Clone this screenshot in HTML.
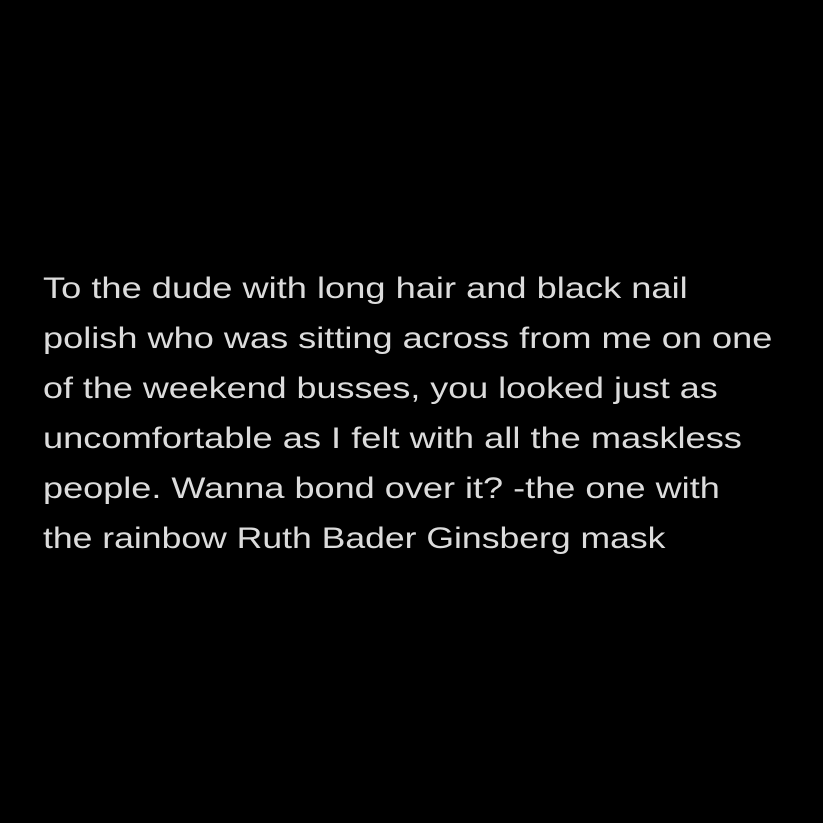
<!DOCTYPE html>
<html>
<head>
<meta charset="utf-8">
<style>
  html, body { margin: 0; padding: 0; background: #000; }
  body { width: 823px; height: 823px; position: relative; overflow: hidden; }
  .t {
    position: absolute; left: 43px; top: 264px;
    font-family: "Liberation Sans", sans-serif;
    font-size: 30px; line-height: 50px; color: #dcdcdc;
    white-space: nowrap;
  }
  .t div { transform-origin: 0 0; height: 50px; }
</style>
</head>
<body>
<div class="t">
<div style="transform:scaleX(1.208)">To the dude with long hair and black nail</div>
<div style="transform:scaleX(1.205)">polish who was sitting across from me on one</div>
<div style="transform:scaleX(1.197)">of the weekend busses, you looked just as</div>
<div style="transform:scaleX(1.208)">uncomfortable as I felt with all the maskless</div>
<div style="transform:scaleX(1.203)">people. Wanna bond over it? -the one with</div>
<div style="transform:scaleX(1.185)">the rainbow Ruth Bader Ginsberg mask</div>
</div>
</body>
</html>
